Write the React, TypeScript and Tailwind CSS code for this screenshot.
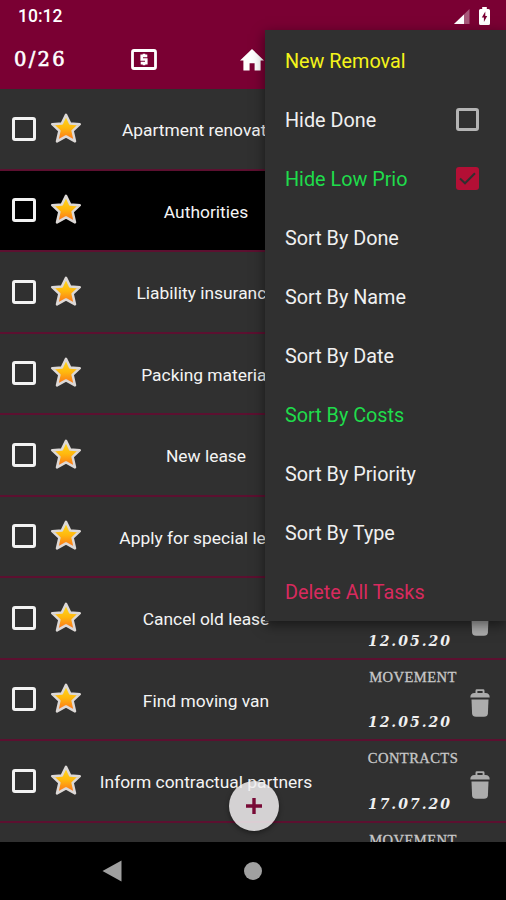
import React from 'react'

interface Task {
  name: string
  type?: string
  date?: string
  selected?: boolean
}

interface MenuEntry {
  label: string
  color: string
  checked?: boolean
}

const tasks: Task[] = [
  { name: 'Apartment renovation' },
  { name: 'Authorities', selected: true },
  { name: 'Liability insurance' },
  { name: 'Packing material' },
  { name: 'New lease' },
  { name: 'Apply for special leave' },
  { name: 'Cancel old lease', date: '12.05.20' },
  { name: 'Find moving van', type: 'MOVEMENT', date: '12.05.20' },
  { name: 'Inform contractual partners', type: 'CONTRACTS', date: '17.07.20' },
  { name: '', type: 'MOVEMENT' },
]

const menu: MenuEntry[] = [
  { label: 'New Removal', color: 'text-[#f4f41a]' },
  { label: 'Hide Done', color: 'text-[#f0f0f0]', checked: false },
  { label: 'Hide Low Prio', color: 'text-[#1fdc4b]', checked: true },
  { label: 'Sort By Done', color: 'text-[#f0f0f0]' },
  { label: 'Sort By Name', color: 'text-[#f0f0f0]' },
  { label: 'Sort By Date', color: 'text-[#f0f0f0]' },
  { label: 'Sort By Costs', color: 'text-[#1fdc4b]' },
  { label: 'Sort By Priority', color: 'text-[#f0f0f0]' },
  { label: 'Sort By Type', color: 'text-[#f0f0f0]' },
  { label: 'Delete All Tasks', color: 'text-[#d82a5e]' },
]

const Star: React.FC = () => (
  <svg width="32" height="32" viewBox="0 0 32 32" className="shrink-0">
    <defs>
      <linearGradient id="star" x1="0" y1="0" x2="0" y2="1">
        <stop offset="0" stopColor="#ffdc20" />
        <stop offset="0.5" stopColor="#ffb80e" />
        <stop offset="1" stopColor="#fb6a1c" />
      </linearGradient>
    </defs>
    <path
      d="M16 2.8 L20.1 11.4 L29.8 12.2 L22.6 18.8 L25 29.4 L16 24.4 L7 29.4 L9.4 18.8 L2.2 12.2 L11.9 11.4 Z"
      fill="url(#star)"
      stroke="#dcd8d6"
      strokeWidth="2.5"
      strokeLinejoin="round"
    />
  </svg>
)

const Trash: React.FC = () => (
  <svg width="20" height="28" viewBox="0 0 20 28" className="shrink-0" fill="#acacac">
    <path d="M5.5 4.5 V1.7 Q5.5 .3 6.9 .3 H13.1 Q14.5 .3 14.5 1.7 V4.5 H12.6 V2 H7.4 V4.5 Z" />
    <path d="M.3 8.6 Q.3 4 4.5 4 H15.5 Q19.7 4 19.7 8.6 Z" />
    <path d="M1.5 10.6 H18.5 L17.9 24.5 Q17.6 27.8 14 27.8 H6 Q2.4 27.8 2.1 24.5 Z" />
  </svg>
)

const TaskRow: React.FC<{ task: Task }> = ({ task }) => (
  <div className={`flex h-[81.5px] shrink-0 items-center border-b-2 border-[#5c1030] pl-3 ${task.selected ? 'bg-black' : ''}`}>
    <span className="h-6 w-6 shrink-0 rounded-[3px] border-[3px] border-[#f2f2f2]"></span>
    <span className="ml-3.5 -mt-0.5">
      <Star />
    </span>
    <span className="ml-[11px] w-[226px] shrink-0 whitespace-nowrap pt-[3px] text-center text-[17.4px] text-[#f4f4f4]">{task.name}</span>
    <div className="ml-[39px] flex h-full w-[112px] shrink-0 flex-col items-center justify-between pb-1 pr-[2px] pt-1 leading-[26px]">
      <span className="h-[26px] font-['Liberation_Serif',serif] text-[14.6px] tracking-[0.4px] text-[#c8c8c8] [-webkit-text-stroke:0.3px_#c8c8c8]">{task.type}</span>
      <span className="mr-1.5 h-[26px] font-['DejaVu_Serif',serif] text-[14px] font-bold italic tracking-[2px] text-[#f0f0f0]">{task.date}</span>
    </div>
    <span className="mt-2">
      <Trash />
    </span>
  </div>
)

const Menu: React.FC = () => (
  <div className="absolute right-0 top-[30px] flex h-[591px] w-[241px] flex-col bg-[#303030] pt-px shadow-[0_4px_12px_rgba(0,0,0,0.5)]">
    {menu.map(item => (
      <div key={item.label} className={`flex h-[59.1px] items-center justify-between pl-5 pr-[27px] text-[19.8px] ${item.color}`}>
        <span className="pt-[3px]">{item.label}</span>
        {item.checked === false && <span className="h-[23px] w-[23px] rounded-[3px] border-[3px] border-[#b4b4b4]"></span>}
        {item.checked && (
          <span className="h-[23px] w-[23px] rounded-[3px] bg-[#b30f35]">
            <svg width="23" height="23" viewBox="0 0 23 23" fill="none" stroke="#303030" strokeWidth="2">
              <path d="M4 11.5 L9 16.3 L19 6.3" />
            </svg>
          </span>
        )}
      </div>
    ))}
  </div>
)

const App: React.FC = () => {
  return (
    <div className="relative flex h-[900px] w-[506px] flex-col overflow-hidden bg-[#303030] font-['Roboto',sans-serif]">
      <header className="flex h-[89px] shrink-0 flex-col bg-[#7a0033] text-white">
        <div className="flex h-[30px] items-center justify-between pl-[18px] pr-4 pt-0.5">
          <span className="text-[17.5px] font-medium">10:12</span>
          <div className="flex items-center gap-[9px]">
            <svg width="16" height="15" viewBox="0 0 16 15">
              <path d="M15.5 0 V15 H0 Z" fill="#a7597a" />
              <path d="M10 5.5 V15 H0 Z" fill="#fff" />
            </svg>
            <svg width="11" height="18" viewBox="0 0 11 18">
              <path d="M3.2 0 H7.8 V2 H9.5 Q11 2 11 3.5 V16.5 Q11 18 9.5 18 H1.5 Q0 18 0 16.5 V3.5 Q0 2 1.5 2 H3.2 Z" fill="#fff" />
              <path d="M6.3 4.5 L2.8 10.4 H4.9 V15 L8.2 9 H6.3 Z" fill="#7a0033" />
            </svg>
          </div>
        </div>
        <div className="flex h-[59px] items-center">
          <span className="w-[131px] pl-3.5 pt-px font-['DejaVu_Serif',serif] text-[19.5px] tracking-[2.3px] [-webkit-text-stroke:0.6px_white]">0/26</span>
          <svg width="26" height="21" viewBox="0 0 26 21" fill="none" stroke="#fff">
            <rect x="1.5" y="1.5" width="23" height="18" rx="1.5" strokeWidth="2.8" />
            <path d="M16.3 6.9 H10.7 V10.5 H15.3 V14.1 H9.7 M13 4.7 V7 M13 14 V16.3" strokeWidth="2.6" />
          </svg>
          <svg width="24" height="22" viewBox="0 0 24 22" fill="#fff" className="ml-[83px]">
            <path d="M12 0 L24 11.5 H20.6 V21.5 H14.6 V14.3 H9.6 V21.5 H3.4 V11.5 H0 Z" />
          </svg>
        </div>
      </header>

      <main className="flex h-[753px] shrink-0 flex-col overflow-hidden">
        {tasks.map((task, i) => (
          <TaskRow key={i} task={task} />
        ))}
      </main>

      <nav className="flex h-[58px] shrink-0 items-center bg-black pl-[102px]">
        <svg width="20" height="22" viewBox="0 0 20 22" fill="#a0a0a0">
          <path d="M19.5 .5 V21.5 L.5 11 Z" />
        </svg>
        <span className="ml-[122px] h-[18px] w-[18px] rounded-full bg-[#a0a0a0]"></span>
      </nav>

      <button className="absolute left-[229px] top-[781px] flex h-[50px] w-[50px] items-center justify-center rounded-full bg-[#f1eff0]/85 shadow-[0_2px_5px_rgba(0,0,0,0.4)]">
        <svg width="16" height="16" viewBox="0 0 16 16" stroke="#780a36" strokeWidth="3.4">
          <path d="M8 0 V16 M0 8 H16" />
        </svg>
      </button>

      <Menu />
    </div>
  )
}

export default App
